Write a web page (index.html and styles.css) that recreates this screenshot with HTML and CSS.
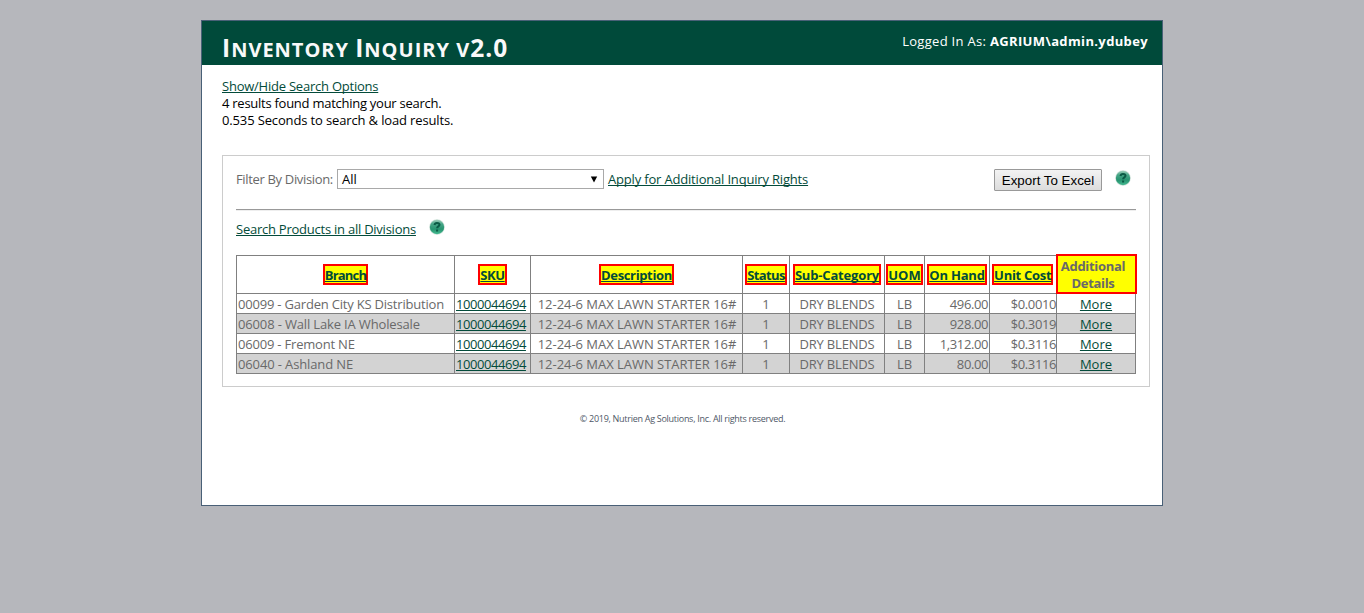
FILE: index.html
```html
<!DOCTYPE html>
<html lang="en">
<head>
<meta charset="utf-8">
<title>Inventory Inquiry v2.0</title>
<link rel="stylesheet" href="styles.css">
</head>
<body>
<svg width="0" height="0" class="defs" aria-hidden="true">
  <defs>
    <linearGradient id="ball" x1="0" y1="0" x2="0" y2="1">
      <stop offset="0" stop-color="#9fcdba"/><stop offset=".3" stop-color="#45a586"/>
      <stop offset=".65" stop-color="#279470"/><stop offset="1" stop-color="#45ba91"/>
    </linearGradient>
    <symbol id="help" viewBox="0 0 16 16">
      <circle cx="8" cy="8" r="7.8" fill="#d3e3dc"/>
      <circle cx="8" cy="8" r="7.200" fill="url(#ball)"/>
      <path d="M5.500 6C5.700 4.500 6.600 3.900 8 3.900c1.500 0 2.500.7 2.500 1.900C10.500 7.500 8.100 7.400 8.100 9.300M8.100 10.500v2" fill="none" stroke="#0b5a45" stroke-width="2"/>
    </symbol>
  </defs>
</svg>
<div class="page">
  <header class="header">
    <h1 class="title"><span class="cap">I</span>nventory <span class="cap">I</span>nquiry v<span class="cap">2.0</span></h1>
    <div class="login"><span class="login-label">Logged In As: </span><b class="login-user">AGRIUM\admin.ydubey</b></div>
  </header>
  <div class="summary">
    <div><a class="t-show" href="#">Show/Hide Search Options</a></div>
    <div class="t-count">4 results found matching your search.</div>
    <div class="t-time">0.535 Seconds to search &amp; load results.</div>
  </div>
  <section class="panel">
    <div class="filter">
      <label class="filter-label">Filter By Division:</label>
      <div class="select"><span>All</span><svg width="8" height="7" viewBox="0 0 8 7"><path d="M.8.500h6.400L4 6.500z"/></svg></div>
      <a class="t-apply" href="#">Apply for Additional Inquiry Rights</a>
      <button class="export">Export To Excel</button>
      <svg class="help" width="16" height="16"><use href="#help"/></svg>
    </div>
    <hr class="rule">
    <div class="search"><a class="t-search" href="#">Search Products in all Divisions</a><svg class="help" width="16" height="16"><use href="#help"/></svg></div>
    <table class="grid">
      <colgroup><col class="c1"><col class="c2"><col class="c3"><col class="c4"><col class="c5"><col class="c6"><col class="c7"><col class="c8"><col class="c9"></colgroup>
      <thead><tr>
        <th><a class="mark m1" href="#">Branch</a></th><th><a class="mark m2" href="#">SKU</a></th><th><a class="mark m3" href="#">Description</a></th><th><a class="mark m4" href="#">Status</a></th><th><a class="mark m5" href="#">Sub-Category</a></th><th><a class="mark m6" href="#">UOM</a></th><th><a class="mark m7" href="#">On Hand</a></th><th><a class="mark m8" href="#">Unit Cost</a></th><th class="details">Additional Details</th>
      </tr></thead>
      <tbody>
        <tr><td class="branch b1">00099 - Garden City KS Distribution</td><td class="sku"><a href="#">1000044694</a></td><td class="desc">12-24-6 MAX LAWN STARTER 16#</td><td>1</td><td class="cat">DRY BLENDS</td><td class="uom">LB</td><td class="num">496.00</td><td class="num cost">$0.0010</td><td class="more"><a href="#">More</a></td></tr>
        <tr><td class="branch b2">06008 - Wall Lake IA Wholesale</td><td class="sku"><a href="#">1000044694</a></td><td class="desc">12-24-6 MAX LAWN STARTER 16#</td><td>1</td><td class="cat">DRY BLENDS</td><td class="uom">LB</td><td class="num">928.00</td><td class="num cost">$0.3019</td><td class="more"><a href="#">More</a></td></tr>
        <tr><td class="branch b3">06009 - Fremont NE</td><td class="sku"><a href="#">1000044694</a></td><td class="desc">12-24-6 MAX LAWN STARTER 16#</td><td>1</td><td class="cat">DRY BLENDS</td><td class="uom">LB</td><td class="num">1,312.00</td><td class="num cost">$0.3116</td><td class="more"><a href="#">More</a></td></tr>
        <tr><td class="branch b4">06040 - Ashland NE</td><td class="sku"><a href="#">1000044694</a></td><td class="desc">12-24-6 MAX LAWN STARTER 16#</td><td>1</td><td class="cat">DRY BLENDS</td><td class="uom">LB</td><td class="num">80.00</td><td class="num cost">$0.3116</td><td class="more"><a href="#">More</a></td></tr>
      </tbody>
    </table>
  </section>
  <footer class="footer">© 2019, Nutrien Ag Solutions, Inc. All rights reserved.</footer>
</div>
</body>
</html>
```
FILE: styles.css
```css
* { box-sizing: border-box; }
body { margin: 0; background: #b6b7bc; font: 13px/17px "Open Sans", "Noto Sans", sans-serif; color: #696969; }
a { color: #034b3a; text-decoration: underline; text-decoration-thickness: 1px; text-underline-offset: 1px; text-decoration-skip-ink: none; }
.defs { position: absolute; }
.page { width: 962px; height: 486px; margin: 20px auto 0; background: #fff; border: 1px solid #496077; }
.header { display: flex; justify-content: space-between; height: 44px; padding: 0 14px 0 20px; background: #004a3a; color: #fff; }
.title { margin: 13px 0 0; font-size: 20px; line-height: 32px; font-weight: 700; text-transform: uppercase; letter-spacing: 1px; color: #f9f9f9; white-space: nowrap; }
.cap { font-size: 24.5px; line-height: 1; }
.login { margin-top: 12px; white-space: pre; }
.login-label { letter-spacing: .3px; }
.login-user { letter-spacing: .36px; }
.summary { height: 90px; padding: 13px 20px 0; color: #000; }
.t-show { letter-spacing: -.23px; }
.t-count { letter-spacing: -.26px; }
.t-time { letter-spacing: -.14px; }
.panel { width: 928px; height: 232px; margin-left: 20px; border: 1px solid #ccc; padding: 13px; }
.filter { display: flex; align-items: flex-start; height: 40px; white-space: nowrap; }
.filter-label { width: 101px; padding-top: 2px; letter-spacing: -.34px; }
.select { display: flex; justify-content: space-between; width: 267px; height: 20px; margin-right: 4px; padding: 1px 5px 0 4px; border: 1px solid #a9a9a9; color: #000; }
.select svg { margin-top: 5px; }
.t-apply { padding-top: 2px; letter-spacing: -.18px; }
.export { width: 108px; height: 22px; margin-left: auto; padding: 1px 0 0; border: 1px solid #999; border-radius: 1px; background: linear-gradient(#f3f3f3, #dcdcdc); color: #000; font: 13.333px/17px "Liberation Sans", Arial, sans-serif; letter-spacing: 0; }
.filter .help { margin: 1px 5px 0 13px; }
.rule { height: 2px; margin: 0; border: 0; border-top: 1px solid #999; border-bottom: 1px solid #eee; }
.search { display: flex; height: 43px; padding-top: 10px; }
.t-search { letter-spacing: -.24px; }
.search .help { margin-left: 13px; margin-top: -2px; }
.grid { width: 900px; table-layout: fixed; border-collapse: collapse; line-height: 17px; }
.grid th, .grid td { padding: 1px; border: 1px solid #808080; text-align: center; white-space: nowrap; }
.grid thead tr { height: 38px; }
.grid tbody tr { height: 20px; }
.grid tbody td { padding: 2px 1px 0; }
.grid tbody tr:nth-child(even) { background: #d3d3d3; }
.c1 { width: 218px; } .c2 { width: 76px; } .c3 { width: 212px; } .c4 { width: 47px; } .c5 { width: 95px; }
.c6 { width: 40px; } .c7 { width: 65px; } .c8 { width: 67px; } .c9 { width: 79px; }
.mark { display: inline-block; height: 21px; margin-top: 1px; border: 2px solid #f00; background: #ff0; line-height: 18px; }
.m1 { letter-spacing: -.78px; } .m2 { letter-spacing: -.45px; } .m3 { letter-spacing: -.36px; }
.m4 { letter-spacing: -.6px; } .m5 { letter-spacing: -.17px; } .m6 { letter-spacing: .1px; }
.m7 { letter-spacing: -.2px; } .m8 { letter-spacing: -.28px; }
.grid th.details { background: #ff0; border: 2px solid #f00; padding: 1px 6px 0 0; white-space: normal; letter-spacing: -.3px; }
.grid td.branch { text-align: left; }
.b1 { letter-spacing: -.2px; } .b2 { letter-spacing: -.15px; } .b3 { letter-spacing: -.2px; } .b4 { letter-spacing: -.13px; }
.grid td.sku { text-align: left; letter-spacing: -.44px; }
.grid td.desc { padding-left: 2px; letter-spacing: -.03px; }
.cat { letter-spacing: -.2px; }
.grid td.num { text-align: right; letter-spacing: -.4px; }
.grid td.cost { padding-right: 0; }
.footer { margin-top: 24px; padding-left: 1px; text-align: center; font-size: 9px; line-height: 16px; color: #4e5766; letter-spacing: -.28px; }
```
